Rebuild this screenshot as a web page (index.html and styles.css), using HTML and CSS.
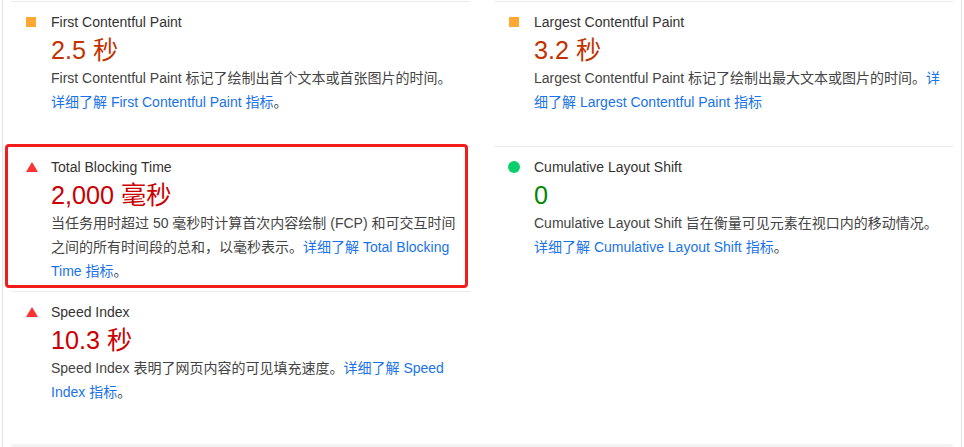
FILE: index.html
```html
<!DOCTYPE html>
<html lang="zh-CN">
<head>
<meta charset="utf-8">
<title>Metrics</title>
<link rel="stylesheet" href="styles.css">
</head>
<body>
<div class="panel">
  <div class="metrics">
    <div class="metric">
      <div class="icon-cell"><span class="icon icon-average"></span></div>
      <div class="title">First Contentful Paint</div>
      <div class="value value-average">2.5 秒</div>
      <p class="desc">First Contentful Paint 标记了绘制出首个文本或首张图片的时间。<a class="link" href="#">详细了解 First Contentful Paint 指标</a>。</p>
    </div>
    <div class="metric">
      <div class="icon-cell"><span class="icon icon-average"></span></div>
      <div class="title">Largest Contentful Paint</div>
      <div class="value value-average">3.2 秒</div>
      <p class="desc">Largest Contentful Paint 标记了绘制出最大文本或图片的时间。<a class="link" href="#">详细了解 Largest Contentful Paint 指标</a></p>
    </div>
    <div class="metric highlighted">
      <div class="icon-cell"><span class="icon icon-fail"></span></div>
      <div class="title">Total Blocking Time</div>
      <div class="value value-fail">2,000 毫秒</div>
      <p class="desc">当任务用时超过 50 毫秒时计算首次内容绘制 (FCP) 和可交互时间之间的所有时间段的总和，以毫秒表示。<a class="link" href="#">详细了解 Total Blocking Time 指标</a>。</p>
    </div>
    <div class="metric">
      <div class="icon-cell"><span class="icon icon-pass"></span></div>
      <div class="title">Cumulative Layout Shift</div>
      <div class="value value-pass">0</div>
      <p class="desc">Cumulative Layout Shift 旨在衡量可见元素在视口内的移动情况。<a class="link" href="#">详细了解 Cumulative Layout Shift 指标</a>。</p>
    </div>
    <div class="metric">
      <div class="icon-cell"><span class="icon icon-fail"></span></div>
      <div class="title">Speed Index</div>
      <div class="value value-fail">10.3 秒</div>
      <p class="desc">Speed Index 表明了网页内容的可见填充速度。<a class="link" href="#">详细了解 Speed Index 指标</a>。</p>
    </div>
  </div>
  <div class="next-section"></div>
</div>
</body>
</html>
```
FILE: styles.css
```css
html, body {
  margin: 0;
  padding: 0;
  background: #ffffff;
}

body {
  font-family: "Liberation Sans", Arial, "Noto Sans CJK SC", sans-serif;
  font-size: 14px;
  color: #212121;
  height: 447px;
  overflow: hidden;
}

.panel {
  margin-left: 2px;
  width: 942px;
  height: 446px;
  box-sizing: content-box;
  border-left: 1px solid #e3e3e3;
  border-right: 1px solid #e3e3e3;
  padding: 1px 8px 0 8px;
  overflow: hidden;
}

.metrics {
  display: grid;
  grid-template-columns: 1fr 1fr;
  grid-auto-rows: 1fr;
  column-gap: 24px;
}

.metric {
  position: relative;
  border-top: 1px solid #ebebeb;
  padding: 8px 8px 8px 0;
  display: grid;
  grid-template-columns: 40px 1fr;
  align-content: start;
}

.highlighted::after {
  content: "";
  position: absolute;
  top: -3px;
  left: -6px;
  right: 2px;
  bottom: 3px;
  border: 3px solid #f21c1c;
  border-radius: 4px;
  pointer-events: none;
}

.icon-cell {
  grid-column: 1;
  grid-row: 1;
  height: 24px;
  display: flex;
  align-items: center;
  justify-content: center;
}

.icon {
  display: block;
}

.icon-average {
  width: 10px;
  height: 10px;
  background: #ffa733;
  margin-left: -1px;
}

.icon-fail {
  width: 0;
  height: 0;
  border-left: 6px solid transparent;
  border-right: 6px solid transparent;
  border-bottom: 10px solid #ff3333;
  margin-left: 2px;
}

.icon-pass {
  width: 12px;
  height: 12px;
  border-radius: 50%;
  background: #0cce6b;
}

.title {
  grid-column: 2;
  grid-row: 1;
  line-height: 24px;
  color: #333333;
}

.value {
  grid-column: 2;
  font-size: 25.2px;
  line-height: 32px;
}

.value-average { color: #c33300; }
.value-fail { color: #cc0000; }
.value-pass { color: #008800; }

.desc {
  grid-column: 2;
  margin: 0;
  line-height: 24px;
  color: #444444;
}

.link {
  color: #1a73e8;
  text-decoration: none;
}

.next-section {
  margin-top: 8px;
  height: 40px;
  background: #f3f3f3;
  border-radius: 3px 3px 0 0;
}
```
